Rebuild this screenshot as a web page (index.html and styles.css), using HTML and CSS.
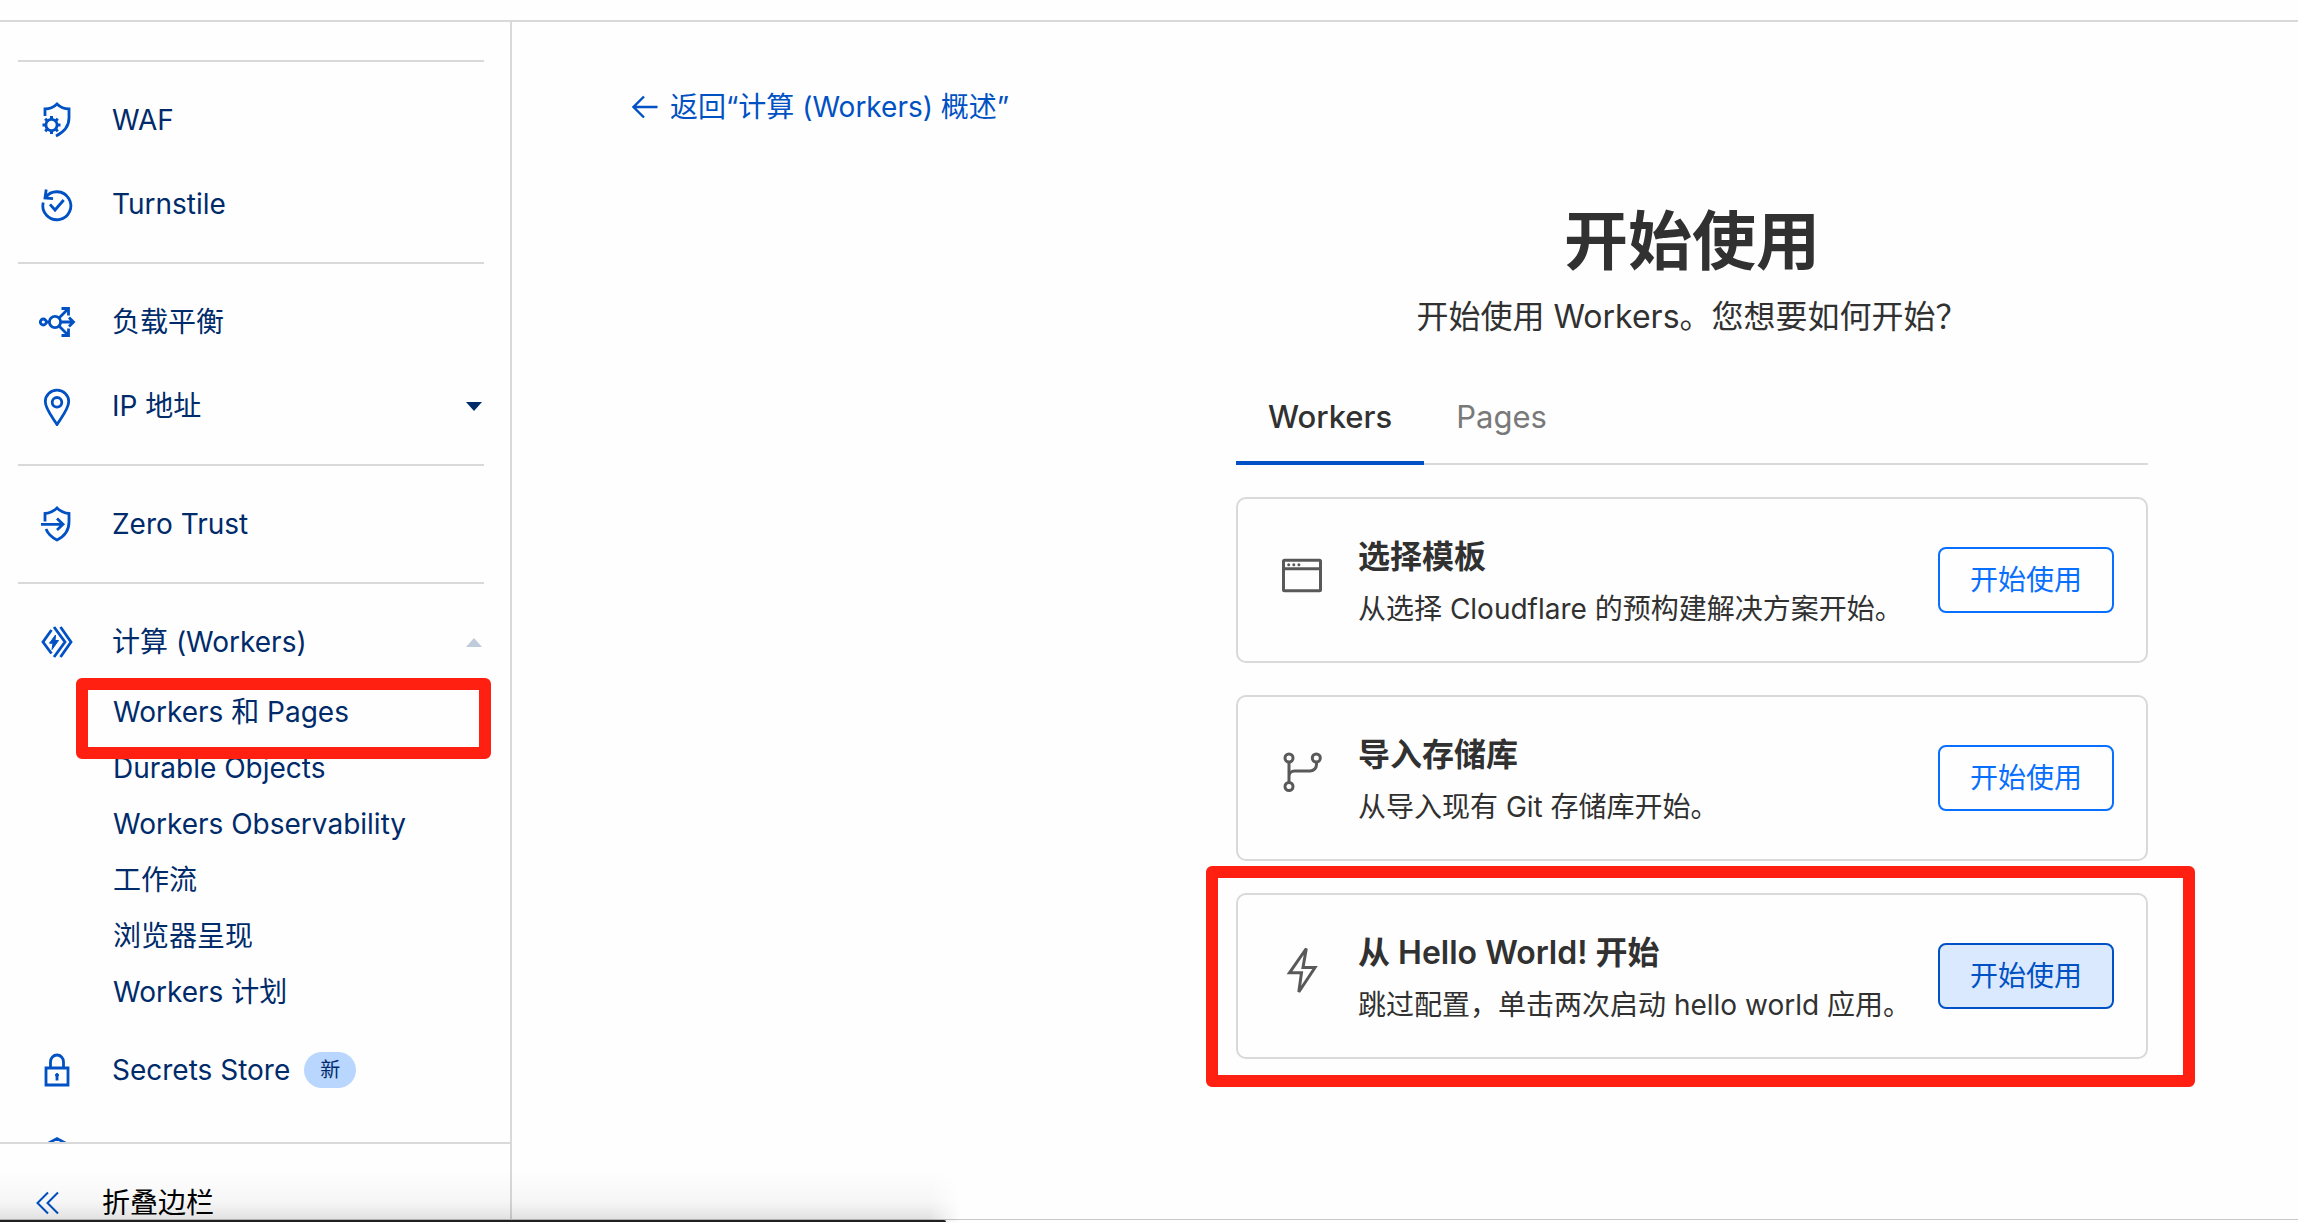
FILE: index.html
```html
<!DOCTYPE html>
<html lang="zh-CN">
<head>
  <meta charset="UTF-8">
  <meta name="viewport" content="width=device-width, initial-scale=1.0">
  <title>Workers 和 Pages</title>
  <link rel="stylesheet" href="styles.css">
</head>
<body>
  <header class="topbar"></header>
  <div class="layout">
    <aside class="sidebar">
      <nav class="nav">
        <div class="nav-group">
          <a class="nav-item" href="#">
            <svg class="nav-icon" viewBox="0 0 40 40">
              <path d="M9 16V9c5 0 9-2 12-5 3 3 7 5 12 5v9c0 8-5 14-13 18"/>
              <circle cx="15.5" cy="25" r="5.6"/>
              <path stroke-width="3" d="M15.5 16v3M15.5 31v3M6.500 25h3M21.500 25h3M9.200 18.700l2 2M19.800 29.300l2 2M9.200 31.300l2-2M19.800 20.700l2-2"/>
            </svg>
            WAF
          </a>
          <a class="nav-item" href="#">
            <svg class="nav-icon" viewBox="0 0 40 40">
              <path d="M7.200 18.500A14 14 0 1 0 9.500 13.500"/>
              <path d="M10.200 5.500L9 14l8 .6"/>
              <path d="M14 20.300l5 5.700 8.700-10"/>
            </svg>
            Turnstile
          </a>
        </div>
        <div class="nav-group">
          <a class="nav-item" href="#">
            <svg class="nav-icon" viewBox="0 0 40 40">
              <circle cx="7.3" cy="20" r="3"/>
              <circle cx="19" cy="20" r="5.6"/>
              <path d="M10.300 20h3M24.600 20H37M33 15.500l4.500 4.500-4.500 4.500M23 16l9-9M25.500 6.500h7V13.500M23 24l9 9M25.500 33.500h7V26.500"/>
            </svg>
            负载平衡
          </a>
          <a class="nav-item" href="#">
            <svg class="nav-icon" viewBox="0 0 40 40">
              <path d="M21 38.500C17 32 9.300 23 9.300 15.500a11.700 11.300 0 0 1 23.400 0C32.700 23 25 32 21 38.500z"/>
              <circle cx="21" cy="16.3" r="4.8"/>
            </svg>
            IP 地址
            <svg class="caret" viewBox="0 0 16 9"><path d="M0 0h16L8 9z"/></svg>
          </a>
        </div>
        <div class="nav-group">
          <a class="nav-item" href="#">
            <svg class="nav-icon" viewBox="0 0 40 40">
              <path d="M9 17.500V9.500c5-.5 9-2.500 12-5.500 3 3 7 5 12 5.500V18c0 8-4 14-12 18-5-2.500-9-6-11-11"/>
              <path d="M5 20.300h22M21 14.500l6 5.800-6 5.800"/>
            </svg>
            Zero Trust
          </a>
        </div>
        <div class="nav-group">
          <a class="nav-item" href="#">
            <svg class="nav-icon" viewBox="0 0 40 40">
              <path d="M15.500 8L7 20l8.500 11.500M18 5l11 15-11 15M24.500 5L35 20 24.500 35"/>
              <path class="solid" d="M19.500 13l-6 8.200H17L16 27.500l6.500-9h-3.500z"/>
            </svg>
            计算 (Workers)
            <svg class="caret caret-open" viewBox="0 0 16 9"><path d="M0 9h16L8 0z"/></svg>
          </a>
          <ul class="subnav">
            <li class="marked"><a href="#">Workers 和 Pages</a></li>
            <li><a href="#">Durable Objects</a></li>
            <li><a href="#">Workers Observability</a></li>
            <li><a href="#">工作流</a></li>
            <li><a href="#">浏览器呈现</a></li>
            <li><a href="#">Workers 计划</a></li>
          </ul>
          <a class="nav-item" href="#">
            <svg class="nav-icon" viewBox="0 0 40 40">
              <path d="M10 18h22v17H10zM14.500 18v-6a6.500 7 0 0 1 13 0v6"/>
              <circle class="solid" cx="21" cy="25" r="1.5"/>
              <path d="M21 25v5.500"/>
            </svg>
            Secrets Store
            <span class="badge">新</span>
          </a>
          <a class="nav-item" href="#" aria-label="R2">
            <svg class="nav-icon" viewBox="0 0 40 40">
              <path d="M10 10.500L21 4.500l11 6v19l-11 6-11-6z"/>
            </svg>
          </a>
        </div>
      </nav>
      <button class="collapse" type="button">
        <svg class="collapse-icon" viewBox="0 0 24 24"><path d="M12 1.500L1.500 12 12 22.500M22 1.500L11.500 12 22 22.500"/></svg>
        折叠边栏
      </button>
    </aside>

    <main class="main">
      <a class="back" href="#">
        <svg class="back-icon" viewBox="0 0 26 24"><path d="M25.500 12H2M12 1.500L1.500 12 12 22.500"/></svg>
        返回“计算 (Workers) 概述”
      </a>
      <section class="start">
        <h1>开始使用</h1>
        <p class="lead">开始使用 Workers。您想要如何开始？</p>
        <div class="tabs" role="tablist">
          <button class="tab active" type="button" role="tab" aria-selected="true">Workers</button>
          <button class="tab" type="button" role="tab" aria-selected="false">Pages</button>
        </div>
        <div class="cards">
          <article class="card">
            <svg class="card-icon" viewBox="0 0 48 48">
              <rect x="5.500" y="9.200" width="37" height="30.500" rx="1"/>
              <path d="M5.500 17.700h37"/>
              <g class="dots"><circle cx="10.700" cy="13.700" r="1.500"/><circle cx="15.800" cy="13.700" r="1.500"/><circle cx="20.900" cy="13.700" r="1.500"/></g>
            </svg>
            <div class="card-text">
              <h2>选择模板</h2>
              <p>从选择 Cloudflare 的预构建解决方案开始。</p>
            </div>
            <button class="btn" type="button">开始使用</button>
          </article>
          <article class="card">
            <svg class="card-icon" viewBox="0 0 48 48">
              <circle cx="11" cy="9" r="4"/>
              <circle cx="38.300" cy="9" r="4"/>
              <circle cx="11" cy="37.500" r="4"/>
              <path d="M11 13v20.500M38.500 13v2.500a6.500 6.500 0 0 1-6.500 6.500H16.500a5.500 5.500 0 0 0-5.500 5.500"/>
            </svg>
            <div class="card-text">
              <h2>导入存储库</h2>
              <p>从导入现有 Git 存储库开始。</p>
            </div>
            <button class="btn" type="button">开始使用</button>
          </article>
          <article class="card marked">
            <svg class="card-icon" viewBox="0 0 48 48">
              <path d="M28.300 1.500L11.500 25.800h12L20.800 45 37 20.500H25z"/>
            </svg>
            <div class="card-text">
              <h2>从 Hello World! 开始</h2>
              <p>跳过配置，单击两次启动 hello world 应用。</p>
            </div>
            <button class="btn hover" type="button">开始使用</button>
          </article>
        </div>
      </section>
    </main>
  </div>
  <div class="dock"></div>
</body>
</html>
```
FILE: styles.css
```css
* {
  box-sizing: border-box;
}

body {
  margin: 0;
  height: 100vh;
  display: flex;
  flex-direction: column;
  overflow: hidden;
  position: relative;
  font-family: Inter, "Noto Sans CJK SC", sans-serif;
  font-size: 28px;
  line-height: 40px;
  color: #313131;
  background-color: #fefefe;
}

a {
  color: inherit;
  text-decoration: none;
}

button {
  font: inherit;
  color: inherit;
  background: none;
  border: none;
  padding: 0;
  cursor: pointer;
}

svg {
  flex: none;
  fill: none;
  stroke: currentColor;
}

.topbar {
  flex: none;
  height: 22px;
  border-bottom: 2px solid #d9d9d9;
}

.layout {
  flex: 1;
  min-height: 0;
  display: flex;
}

/* sidebar */
.sidebar {
  flex: none;
  width: 512px;
  display: flex;
  flex-direction: column;
  border-right: 2px solid #d9d9d9;
  color: #002b6b;
}

.nav {
  flex: 1;
  min-height: 0;
  overflow: hidden;
  padding: 38px 26px 0 18px;
}

.nav-group {
  border-top: 2px solid #d9d9d9;
  padding: 16px 0;
}

.nav-item {
  display: flex;
  align-items: center;
  height: 84px;
  padding: 0 2px 0 18px;
}

.nav-icon {
  width: 40px;
  height: 40px;
  margin-right: 36px;
  color: #0051c3;
  stroke-width: 2.8;
}

.nav-icon .solid {
  fill: currentColor;
  stroke-width: 1;
}

.caret {
  width: 16px;
  height: 9px;
  margin-left: auto;
  fill: currentColor;
  stroke: none;
}

.caret-open {
  color: #bfcada;
}

.subnav {
  list-style: none;
  margin: 0 0 8px;
  padding: 0 0 0 95px;
}

.subnav li {
  height: 56px;
  line-height: 56px;
}

.badge {
  margin-left: 14px;
  padding: 0 16px;
  border-radius: 18px;
  background-color: #b9d6ff;
  font-size: 20px;
  line-height: 36px;
}

.collapse {
  flex: none;
  display: flex;
  align-items: center;
  height: 80px;
  padding: 40px 0 0 36px;
  border-top: 2px solid #d9d9d9;
  color: #000;
}

.collapse-icon {
  width: 24px;
  height: 24px;
  margin-right: 42px;
  color: #0051c3;
  stroke-width: 2;
}

/* main column */
.main {
  flex: 1;
  min-width: 0;
  padding: 65px 150px 0 120px;
}

.back {
  display: inline-flex;
  align-items: center;
  gap: 12px;
  color: #0051c3;
}

.back-icon {
  width: 26px;
  height: 24px;
  stroke-width: 2.4;
}

.start {
  max-width: 912px;
  margin: 72px 0 0 auto;
}

h1 {
  margin: 0;
  font-size: 64px;
  line-height: 80px;
  font-weight: 600;
  text-align: center;
}

.lead {
  margin: 12px 0 0;
  font-size: 32px;
  line-height: 48px;
  text-align: center;
}

.tabs {
  display: flex;
  margin-top: 52px;
  border-bottom: 2px solid #d9d9d9;
}

.tab {
  padding: 0 32px 20px;
  margin-bottom: -2px;
  border-bottom: 4px solid transparent;
  font-size: 31px;
  line-height: 48px;
  color: #797979;
}

.tab.active {
  border-color: #0051c3;
  color: #313131;
  font-weight: 500;
}

.cards {
  display: flex;
  flex-direction: column;
  gap: 32px;
  margin-top: 32px;
}

.card {
  display: flex;
  align-items: center;
  height: 166px;
  padding: 0 32px 0 40px;
  border: 2px solid #d9d9d9;
  border-radius: 10px;
}

.card-icon {
  width: 48px;
  height: 48px;
  margin: 0 32px 10px 0;
  color: #595959;
  stroke-width: 3;
}

.dots {
  fill: currentColor;
  stroke: none;
}

.card-text {
  flex: 1;
  padding-top: 5px;
}

.card h2 {
  margin: 0;
  font-size: 32px;
  line-height: 48px;
  font-weight: 600;
}

.card p {
  margin: 4px 0 0;
  line-height: 48px;
}

.btn {
  padding: 0 30px;
  border: 2px solid #086fff;
  border-radius: 8px;
  line-height: 62px;
  color: #086fff;
}

.btn.hover {
  border-color: #0051c3;
  background-color: #dbe9ff;
  color: #0051c3;
}

/* red call-out frames */
.marked {
  position: relative;
}

.marked::after {
  content: "";
  position: absolute;
  border: 12px solid #ff2012;
  border-radius: 6px;
  pointer-events: none;
}

.subnav .marked::after {
  inset: -6px -7px -19px -37px;
}

.card.marked::after {
  inset: -29px -49px -30px -32px;
}

/* window edge along the bottom */
.dock {
  position: absolute;
  left: 0;
  right: 0;
  bottom: 0;
  height: 3px;
  background: linear-gradient(#c8c8c8 1px, transparent 1px);
  pointer-events: none;
}

.dock::before {
  content: "";
  position: absolute;
  left: 0;
  bottom: 0;
  width: 960px;
  height: 50px;
  background: linear-gradient(transparent, rgba(0, 0, 0, 0.03) 60%, rgba(0, 0, 0, 0.12));
  mask-image: linear-gradient(to right, #000 930px, transparent);
}

.dock::after {
  content: "";
  position: absolute;
  left: 0;
  bottom: 0;
  width: 946px;
  height: 2px;
  border-top-right-radius: 2px;
  background-color: #1e2022;
}
```
